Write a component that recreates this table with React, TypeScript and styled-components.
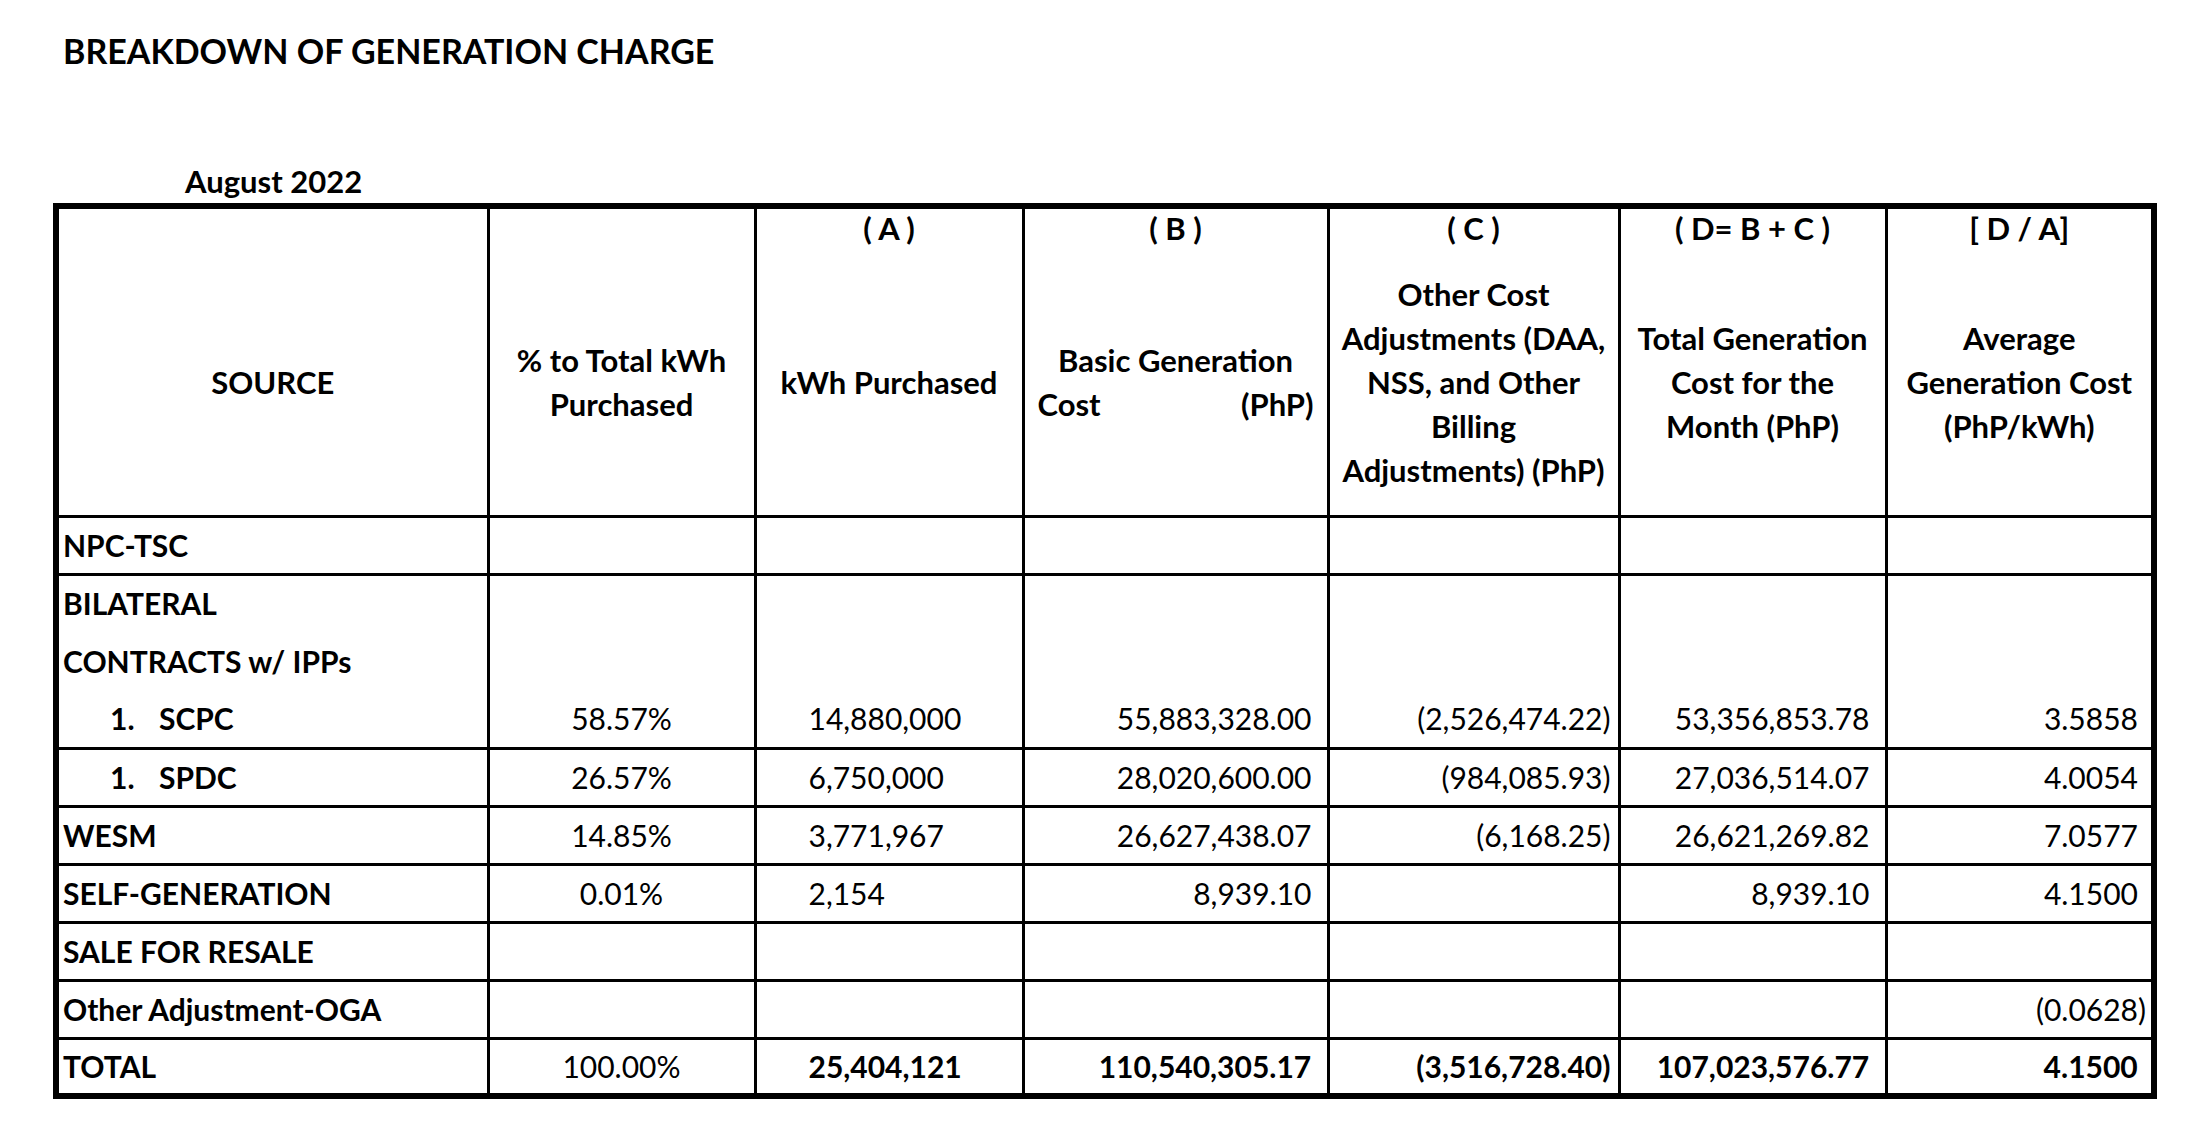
import React from 'react';
import styled, { createGlobalStyle } from 'styled-components';

const GlobalStyle = createGlobalStyle`
  html, body { margin: 0; padding: 0; background: #ffffff; }
  body { font-family: Lato, "Open Sans", "Liberation Sans", sans-serif; color: #000000; }
`;

const Page = styled.main`
  width: 2210px;
  min-height: 1130px;
  padding-top: 31px;
  box-sizing: border-box;
  background: #ffffff;
`;

const Title = styled.h1`
  margin: 0 0 0 63px;
  font-size: 34px;
  line-height: 40px;
  font-weight: 700;
  letter-spacing: 0;
`;

const Period = styled.h2`
  margin: 93px 0 4px 185px;
  font-size: 31px;
  line-height: 35px;
  font-weight: 700;
`;

const Sheet = styled.table`
  margin-left: 53px;
  width: 2104px;
  table-layout: fixed;
  border-collapse: collapse;
  border: 6px solid #000000;
  font-size: 30px;
  line-height: 35px;
`;

const Col = styled.col<{ $w: number }>`
  width: ${(p) => p.$w}px;
`;

const LabelRow = styled.tr`
  height: 44px;
`;

const HeadRow = styled.tr`
  height: 266px;
`;

const BodyRow = styled.tr`
  height: 58px;
`;

const HeadCell = styled.th<{ $open?: boolean }>`
  border: 3px solid #000000;
  border-bottom: ${(p) => (p.$open ? 'hidden' : '3px solid #000000')};
  padding: 0 4px;
  font-size: 31px;
  font-weight: 700;
  text-align: center;
  vertical-align: ${(p) => (p.$open ? 'top' : 'middle')};
  line-height: ${(p) => (p.$open ? '38px' : '44px')};
  white-space: nowrap;
`;

const SpreadLine = styled.span`
  display: flex;
  justify-content: space-between;
  padding: 0 9px;
`;

const Cell = styled.td<{ $open?: boolean; $bold?: boolean }>`
  border: 3px solid #000000;
  border-bottom: ${(p) => (p.$open ? 'hidden' : '3px solid #000000')};
  font-weight: ${(p) => (p.$bold ? 700 : 400)};
  vertical-align: middle;
  white-space: nowrap;
  padding: 0;
`;

const SourceCell = styled(Cell)`
  text-align: left;
  padding-left: 4px;
  font-weight: 700;
`;

const PctCell = styled(Cell)`
  text-align: center;
`;

const KwhCell = styled(Cell)`
  text-align: left;
  padding-left: 52px;
`;

const AmountCell = styled(Cell)<{ $edge?: boolean }>`
  text-align: right;
  padding-right: ${(p) => (p.$edge ? '5px' : '7px')};
`;

const Item = styled.span`
  display: inline-flex;
  padding-left: 47px;
`;

const ItemNo = styled.span`
  width: 49px;
`;

const Paren = styled.span`
  visibility: hidden;
`;

type Row = {
  key: string;
  source: React.ReactNode;
  open?: boolean;
  total?: boolean;
  pct?: string;
  kwh?: string;
  basic?: string;
  other?: string;
  month?: string;
  avg?: string;
};

const item = (no: string, name: string) => (
  <Item>
    <ItemNo>{no}</ItemNo>
    {name}
  </Item>
);

const rows: Row[] = [
  { key: 'npc', source: 'NPC-TSC' },
  { key: 'bil', source: 'BILATERAL', open: true },
  { key: 'con', source: 'CONTRACTS w/ IPPs', open: true },
  {
    key: 'scpc',
    source: item('1.', 'SCPC'),
    pct: '58.57%',
    kwh: '14,880,000',
    basic: '55,883,328.00',
    other: '(2,526,474.22)',
    month: '53,356,853.78',
    avg: '3.5858',
  },
  {
    key: 'spdc',
    source: item('1.', 'SPDC'),
    pct: '26.57%',
    kwh: '6,750,000',
    basic: '28,020,600.00',
    other: '(984,085.93)',
    month: '27,036,514.07',
    avg: '4.0054',
  },
  {
    key: 'wesm',
    source: 'WESM',
    pct: '14.85%',
    kwh: '3,771,967',
    basic: '26,627,438.07',
    other: '(6,168.25)',
    month: '26,621,269.82',
    avg: '7.0577',
  },
  {
    key: 'self',
    source: 'SELF-GENERATION',
    pct: '0.01%',
    kwh: '2,154',
    basic: '8,939.10',
    month: '8,939.10',
    avg: '4.1500',
  },
  { key: 'sale', source: 'SALE FOR RESALE' },
  { key: 'oga', source: 'Other Adjustment-OGA', avg: '(0.0628)' },
  {
    key: 'total',
    source: 'TOTAL',
    total: true,
    pct: '100.00%',
    kwh: '25,404,121',
    basic: '110,540,305.17',
    other: '(3,516,728.40)',
    month: '107,023,576.77',
    avg: '4.1500',
  },
];

const Amount: React.FC<{ value?: string }> = ({ value }) => {
  if (!value) return null;
  const negative = value.startsWith('(');
  return (
    <>
      {value}
      {!negative && <Paren aria-hidden="true">)</Paren>}
    </>
  );
};

const widths = [432, 267, 268, 305, 291, 267, 268];

export default function App() {
  return (
    <>
      <GlobalStyle />
      <Page>
        <Title>BREAKDOWN OF GENERATION CHARGE</Title>
        <Period>August 2022</Period>
        <Sheet>
          <colgroup>
            {widths.map((w, i) => (
              <Col key={i} $w={w} />
            ))}
          </colgroup>
          <thead>
            <LabelRow>
              <HeadCell $open />
              <HeadCell $open />
              <HeadCell $open>( A )</HeadCell>
              <HeadCell $open>( B )</HeadCell>
              <HeadCell $open>( C )</HeadCell>
              <HeadCell $open>( D= B + C )</HeadCell>
              <HeadCell $open>[ D / A]</HeadCell>
            </LabelRow>
            <HeadRow>
              <HeadCell>SOURCE</HeadCell>
              <HeadCell>
                % to Total kWh
                <br />
                Purchased
              </HeadCell>
              <HeadCell>kWh Purchased</HeadCell>
              <HeadCell>
                Basic Generation
                <SpreadLine>
                  <span>Cost</span>
                  <span>(PhP)</span>
                </SpreadLine>
              </HeadCell>
              <HeadCell>
                Other Cost
                <br />
                Adjustments (DAA,
                <br />
                NSS, and Other
                <br />
                Billing
                <br />
                Adjustments) (PhP)
              </HeadCell>
              <HeadCell>
                Total Generation
                <br />
                Cost for the
                <br />
                Month (PhP)
              </HeadCell>
              <HeadCell>
                Average
                <br />
                Generation Cost
                <br />
                (PhP/kWh)
              </HeadCell>
            </HeadRow>
          </thead>
          <tbody>
            {rows.map((r) => (
              <BodyRow key={r.key}>
                <SourceCell $open={r.open}>{r.source}</SourceCell>
                <PctCell $open={r.open}>{r.pct}</PctCell>
                <KwhCell $open={r.open} $bold={r.total}>
                  {r.kwh}
                </KwhCell>
                <AmountCell $open={r.open} $bold={r.total}>
                  <Amount value={r.basic} />
                </AmountCell>
                <AmountCell $open={r.open} $bold={r.total}>
                  <Amount value={r.other} />
                </AmountCell>
                <AmountCell $open={r.open} $bold={r.total}>
                  <Amount value={r.month} />
                </AmountCell>
                <AmountCell $open={r.open} $bold={r.total} $edge>
                  <Amount value={r.avg} />
                </AmountCell>
              </BodyRow>
            ))}
          </tbody>
        </Sheet>
      </Page>
    </>
  );
}
